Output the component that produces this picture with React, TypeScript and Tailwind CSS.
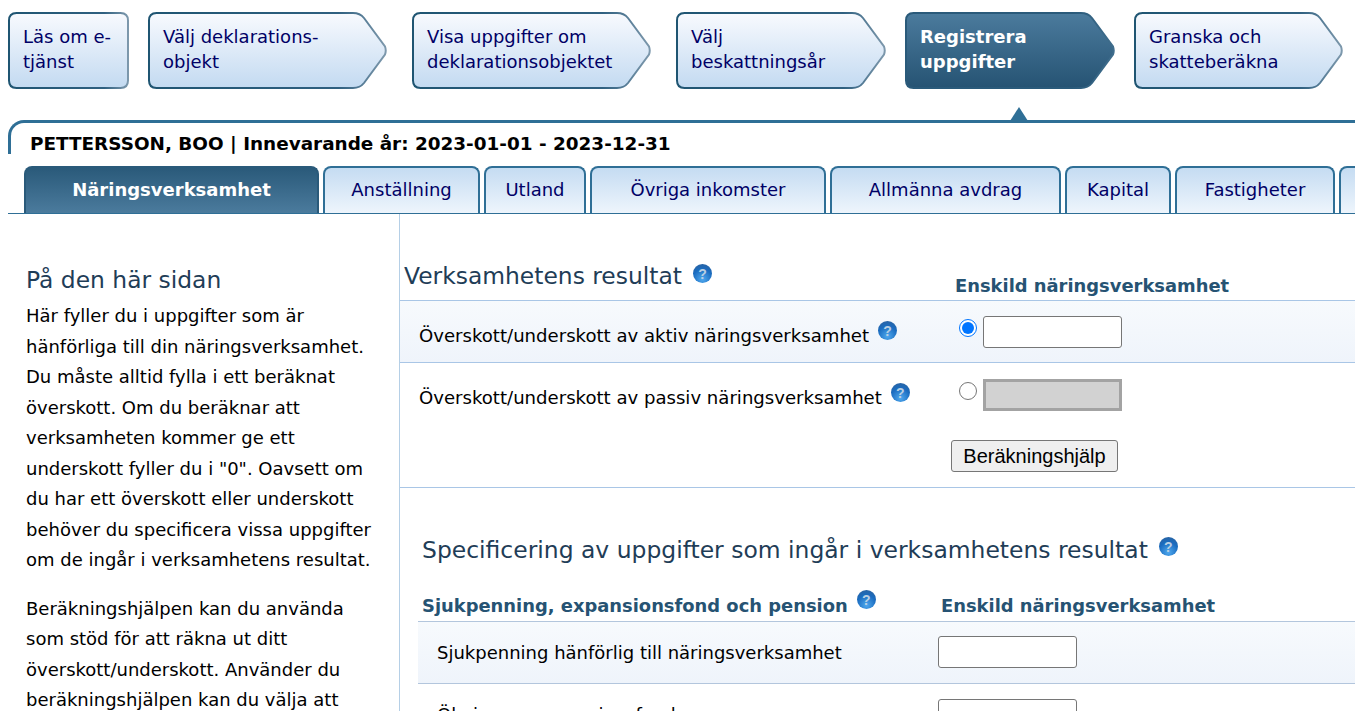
import React from "react";

const font = "font-['DejaVu_Sans','Verdana',sans-serif]";

function stepPath(w: number, h: number, arrow: boolean) {
  if (!arrow) {
    return `M8.5 1H${w - 8.5}Q${w - 1} 1 ${w - 1} 8.5V${h - 8.5}Q${w - 1} ${h - 1} ${w - 8.5} ${h - 1}H8.5Q1 ${h - 1} 1 ${h - 8.5}V8.5Q1 1 8.5 1Z`;
  }
  const m = h / 2;
  return `M8.5 1H${w - 34}Q${w - 27} 1 ${w - 23} 6L${w - 2} ${m - 4}Q${w - 0.5} ${m} ${w - 2} ${m + 4}L${w - 23} ${h - 6}Q${w - 27} ${h - 1} ${w - 34} ${h - 1}H8.5Q1 ${h - 1} 1 ${h - 8.5}V8.5Q1 1 8.5 1Z`;
}

function Step({
  lines,
  width,
  gap,
  arrow = true,
  active = false,
}: {
  lines: string[];
  width: number;
  gap: number;
  arrow?: boolean;
  active?: boolean;
}) {
  const id = `step-${width}-${active ? "a" : "n"}`;
  return (
    <div className="relative h-[77px] shrink-0" style={{ width, marginRight: gap }}>
      <svg className="absolute inset-0" width={width} height={77} viewBox={`0 0 ${width} 77`}>
        <defs>
          <linearGradient id={id} x1="0" y1="0" x2="0" y2="1">
            <stop offset="0" stopColor={active ? "#4b7b9d" : "#f8fafe"} />
            <stop offset="1" stopColor={active ? "#265373" : "#c3daf1"} />
          </linearGradient>
          <linearGradient id={`${id}-s`} x1="0" y1="0" x2="1" y2="0">
            <stop offset="0" stopColor={active ? "#2a5a7a" : "#1f5572"} />
            <stop offset="0.8" stopColor={active ? "#2a5a7a" : "#2f6080"} />
            <stop offset="1" stopColor={active ? "#3f6d8c" : "#7d98ac"} />
          </linearGradient>
        </defs>
        <path d={stepPath(width, 77, arrow)} fill={`url(#${id})`} stroke={`url(#${id}-s)`} strokeWidth="2" />
      </svg>
      <div
        className={`relative pl-[15px] pt-[12px] text-[18px] leading-[25px] ${active ? "font-bold text-white" : "text-[#000066]"}`}
      >
        {lines.map((l) => (
          <div key={l} className="whitespace-nowrap">
            {l}
          </div>
        ))}
      </div>
    </div>
  );
}

function Tab({ label, width, active = false }: { label: string; width: number; active?: boolean }) {
  return (
    <div
      className={`flex h-[47px] shrink-0 items-center justify-center rounded-t-[8px] border-x-2 border-t-2 pb-[2px] text-[18px] ${
        active
          ? "border-[#2a5a7a] bg-gradient-to-b from-[#2a5a7a] to-[#4b7b9d] font-bold text-white"
          : "border-[#2f6f96] bg-gradient-to-b from-[#c5dcf2] to-[#eef5fc] text-[#000066]"
      }`}
      style={{ width }}
    >
      {label}
    </div>
  );
}

function HelpIcon({ className = "" }: { className?: string }) {
  return (
    <span
      className={`inline-flex h-[19px] w-[19px] shrink-0 items-center justify-center rounded-full bg-[radial-gradient(circle_at_50%_80%,#4fa8ee_0%,#1a6cc0_55%,#2f5f96_100%)] font-['Liberation_Sans',sans-serif] text-[14px] font-bold leading-none text-[#b9cfe2] ${className}`}
    >
      ?
    </span>
  );
}

function Radio({ checked = false }: { checked?: boolean }) {
  return (
    <span
      className={`mt-[3px] flex h-[18px] w-[18px] shrink-0 items-center justify-center rounded-full border-[1.5px] bg-white ${
        checked ? "border-[#0075ff]" : "border-[#767676]"
      }`}
    >
      {checked && <span className="h-[12px] w-[12px] rounded-full bg-[#0075ff]" />}
    </span>
  );
}

const sidebar1 = [
  "Här fyller du i uppgifter som är",
  "hänförliga till din näringsverksamhet.",
  "Du måste alltid fylla i ett beräknat",
  "överskott. Om du beräknar att",
  "verksamheten kommer ge ett",
  'underskott fyller du i "0". Oavsett om',
  "du har ett överskott eller underskott",
  "behöver du specificera vissa uppgifter",
  "om de ingår i verksamhetens resultat.",
];

const sidebar2 = [
  "Beräkningshjälpen kan du använda",
  "som stöd för att räkna ut ditt",
  "överskott/underskott. Använder du",
  "beräkningshjälpen kan du välja att",
];

export default function App() {
  return (
    <div className={`${font} h-[711px] w-[1355px] overflow-hidden bg-white text-black`}>
      {/* Steps */}
      <div className="flex pl-[8px] pt-[12px]">
        <Step lines={["Läs om e-", "tjänst"]} width={121} gap={19} arrow={false} />
        <Step lines={["Välj deklarations-", "objekt"]} width={239} gap={25} />
        <Step lines={["Visa uppgifter om", "deklarationsobjektet"]} width={239} gap={25} />
        <Step lines={["Välj", "beskattningsår"]} width={210} gap={19} />
        <Step lines={["Registrera", "uppgifter"]} width={210} gap={19} active />
        <Step lines={["Granska och", "skatteberäkna"]} width={209} gap={0} />
      </div>

      {/* Header panel */}
      <div className="relative mt-[31px] ml-[8px] h-[34px] rounded-tl-[16px] border-l-[3px] border-t-[3px] border-[#2f6f96]">
        <div className="absolute -top-[16px] left-[999px] h-0 w-0 border-x-[9px] border-b-[14px] border-x-transparent border-b-[#2f6f96]" />
        <div className="pl-[19px] pt-[9px] text-[18.4px] font-bold leading-[24px] whitespace-nowrap">
          PETTERSSON, BOO | Innevarande år: 2023-01-01 - 2023-12-31
        </div>
      </div>

      {/* Tabs */}
      <div className="mt-[12px] ml-[8px] flex gap-[4px] border-b border-[#2f6f96] pl-[16px]">
        <Tab label="Näringsverksamhet" width={295} active />
        <Tab label="Anställning" width={157} />
        <Tab label="Utland" width={102} />
        <Tab label="Övriga inkomster" width={236} />
        <Tab label="Allmänna avdrag" width={231} />
        <Tab label="Kapital" width={106} />
        <Tab label="Fastigheter" width={160} />
        <Tab label="" width={40} />
      </div>

      <div className="flex">
        {/* Sidebar */}
        <aside className="h-[520px] w-[400px] shrink-0 border-r border-[#b5cfe6] pl-[26px] pt-[51px]">
          <h2 className="text-[23.4px] leading-[30px] text-[#1f3d57]">På den här sidan</h2>
          <div className="mt-[6px] text-[18px] leading-[30.5px]">
            {sidebar1.map((l) => (
              <div key={l} className="whitespace-nowrap">
                {l}
              </div>
            ))}
          </div>
          <div className="mt-[18px] text-[18px] leading-[30.5px]">
            {sidebar2.map((l) => (
              <div key={l} className="whitespace-nowrap">
                {l}
              </div>
            ))}
          </div>
        </aside>

        {/* Main */}
        <main className="min-w-0 flex-1">
          <div className="flex h-[86px] items-start">
            <div className="flex w-[555px] shrink-0 items-start pl-[4px] pt-[47px]">
              <h2 className="text-[23.4px] leading-[30px] text-[#1f3d57]">Verksamhetens resultat</h2>
              <HelpIcon className="ml-[11px] mt-[3px]" />
            </div>
            <div className="mt-[61px] whitespace-nowrap text-[17.9px] font-bold leading-[22px] text-[#265373]">
              Enskild näringsverksamhet
            </div>
          </div>

          <div className="flex h-[63px] border-y border-[#a9c6e6] bg-gradient-to-b from-[#f7fafd] to-[#eff4fb]">
            <div className="flex w-[559px] shrink-0 items-start pl-[19px] pt-[23px]">
              <span className="whitespace-nowrap text-[18.1px] leading-[24px]">
                Överskott/underskott av aktiv näringsverksamhet
              </span>
              <HelpIcon className="ml-[9px] -mt-[3px]" />
            </div>
            <div className="flex items-start pt-[15px]">
              <Radio checked />
              <input className="ml-[6px] h-[32px] w-[139px] rounded-[3px] border border-[#767676] bg-white" />
            </div>
          </div>

          <div className="flex h-[125px] border-b border-[#a9c6e6]">
            <div className="flex w-[559px] shrink-0 items-start pl-[19px] pt-[23px]">
              <span className="whitespace-nowrap text-[18.1px] leading-[24px]">
                Överskott/underskott av passiv näringsverksamhet
              </span>
              <HelpIcon className="ml-[9px] -mt-[3px]" />
            </div>
            <div className="flex flex-col items-start pt-[16px]">
              <div className="flex items-start">
                <Radio />
                <input disabled className="ml-[6px] h-[32px] w-[139px] border-[3px] border-[#a3a3a3] bg-[#d2d2d2]" />
              </div>
              <button className="-ml-[8px] mt-[29px] h-[32px] w-[167px] rounded-[3px] border border-[#767676] bg-[#efefef] font-['Liberation_Sans',sans-serif] text-[20px] leading-none">
                Beräkningshjälp
              </button>
            </div>
          </div>

          <div className="ml-[18px]">
            <div className="flex items-start pl-[4px] pt-[46px]">
              <h2 className="whitespace-nowrap text-[23.45px] leading-[32px] text-[#1f3d57]">
                Specificering av uppgifter som ingår i verksamhetens resultat
              </h2>
              <HelpIcon className="ml-[11px] mt-[3px]" />
            </div>

            <div className="mt-[28px] flex h-[27px] items-start pl-[4px]">
              <div className="flex w-[519px] shrink-0 items-start">
                <span className="whitespace-nowrap text-[17.9px] font-bold leading-[24px] text-[#265373]">
                  Sjukpenning, expansionsfond och pension
                </span>
                <HelpIcon className="ml-[9px] -mt-[4px]" />
              </div>
              <span className="whitespace-nowrap text-[17.9px] font-bold leading-[24px] text-[#265373]">
                Enskild näringsverksamhet
              </span>
            </div>

            <div className="flex h-[63px] border-y border-[#b3c6dd] bg-gradient-to-b from-[#f7fafd] to-[#eff4fb]">
              <div className="w-[520px] shrink-0 pl-[19px] pt-[19px] text-[18px] leading-[24px]">
                Sjukpenning hänförlig till näringsverksamhet
              </div>
              <input className="mt-[14px] h-[32px] w-[139px] rounded-[3px] border border-[#767676] bg-white" />
            </div>

            <div className="flex h-[63px]">
              <div className="w-[520px] shrink-0 pl-[19px] pt-[19px] text-[18px] leading-[24px]">
                Ökning av expansionsfond
              </div>
              <input className="mt-[15px] h-[32px] w-[139px] rounded-[3px] border border-[#767676] bg-white" />
            </div>
          </div>
        </main>
      </div>
    </div>
  );
}
